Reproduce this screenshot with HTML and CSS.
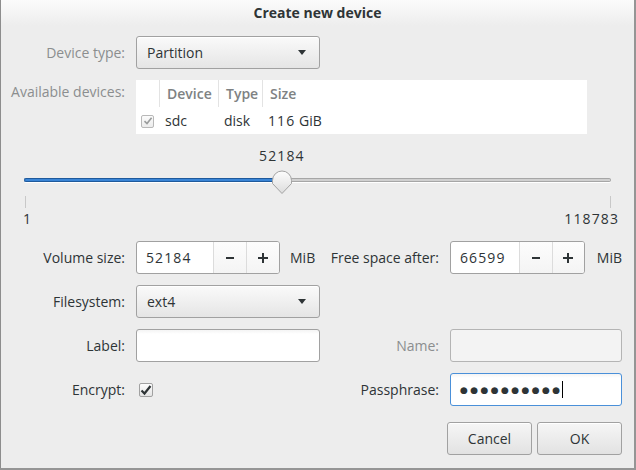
FILE: index.html
```html
<!DOCTYPE html>
<html>
<head>
<meta charset="utf-8">
<link rel="stylesheet" href="styles.css">
</head>
<body>
<div class="window">
  <div class="titlebar">Create new device</div>
  <div class="content">
    <div class="lbl dim g1 r1">Device type:</div>
    <div class="combo g2 r1"><span>Partition</span><span class="arrow"></span></div>

    <div class="lbl dim top g1 r2">Available devices:</div>
    <div class="table r2">
      <div class="tr th">
        <div class="cell ccheck"></div>
        <div class="cell cdev">Device</div>
        <div class="cell ctype">Type</div>
        <div class="cell csize">Size</div>
      </div>
      <div class="tr td">
        <div class="cell ccheck"><span class="tcheck"><svg width="10" height="10" viewBox="0 0 10 10"><path d="M1.5 5.2 L4 7.6 L8.6 1.8" fill="none" stroke="#9a9c9c" stroke-width="1.6"/></svg></span></div>
        <div class="cell cdev">sdc</div>
        <div class="cell ctype">disk</div>
        <div class="cell csize"><span class="num">116</span>&nbsp;GiB</div>
      </div>
    </div>

    <div class="slider r3" style="--pos: 43.93%">
      <div class="sval"><span class="num">52184</span></div>
      <div class="trackwrap">
        <div class="track"><div class="fill"></div><div class="rest"></div></div>
        <svg class="knob" width="22" height="25" viewBox="0 0 22 25">
          <defs><linearGradient id="kg" x1="0" y1="0" x2="0" y2="1"><stop offset="0" stop-color="#fdfdfd"/><stop offset="1" stop-color="#dcdcdc"/></linearGradient></defs>
          <path d="M1.5 10.5 A9.5 9.5 0 0 1 20.5 10.5 L20.5 13.5 L11 23.5 L1.5 13.5 Z" fill="url(#kg)" stroke="#a3a3a3" stroke-width="1"/>
        </svg>
      </div>
      <div class="ticks"><span></span><span></span></div>
      <div class="marks"><span class="num">1</span><span class="num">118783</span></div>
    </div>

    <div class="lbl g1 r4">Volume size:</div>
    <div class="spinrow g2 r4">
      <div class="spin"><div class="sent w77 num">52184</div><div class="sbtn"><svg width="10" height="10" viewBox="0 0 10 10"><path d="M1 5H9" stroke="#2e3436" stroke-width="2"/></svg></div><div class="sbtn"><svg width="10" height="10" viewBox="0 0 10 10"><path d="M0 5H10M5 0V10" stroke="#2e3436" stroke-width="2"/></svg></div></div>
      <span class="unit">MiB</span>
    </div>
    <div class="lbl g3 r4">Free space after:</div>
    <div class="spinrow g4 r4">
      <div class="spin"><div class="sent w70 num">66599</div><div class="sbtn"><svg width="10" height="10" viewBox="0 0 10 10"><path d="M1 5H9" stroke="#2e3436" stroke-width="2"/></svg></div><div class="sbtn"><svg width="10" height="10" viewBox="0 0 10 10"><path d="M0 5H10M5 0V10" stroke="#2e3436" stroke-width="2"/></svg></div></div>
      <span class="unit u2">MiB</span>
    </div>

    <div class="lbl g1 r5">Filesystem:</div>
    <div class="combo g2 r5"><span>ext4</span><span class="arrow"></span></div>

    <div class="lbl g1 r6">Label:</div>
    <div class="entry g2 r6"></div>
    <div class="lbl dim g3 r6">Name:</div>
    <div class="entry insens g4 r6"></div>

    <div class="lbl g1 r7">Encrypt:</div>
    <div class="cbwrap g2 r7"><span class="cbox"><svg width="12" height="12" viewBox="0 0 12 12"><path d="M1.5 6.5 L4.5 9.5 L10.5 2" fill="none" stroke="#2e3436" stroke-width="2.2"/></svg></span></div>
    <div class="lbl g3 r7">Passphrase:</div>
    <div class="entry focus g4 r7"><span class="dots">●●●●●●●●●●</span><span class="cursor"></span></div>

    <div class="buttons r8">
      <div class="btn">Cancel</div>
      <div class="btn">OK</div>
    </div>
  </div>
</div>
</body>
</html>
```
FILE: styles.css
```css
* { box-sizing: border-box; }
html, body { margin: 0; padding: 0; }
body {
  width: 636px; height: 470px; overflow: hidden;
  background: #959595;
  font-family: "Open Sans", "DejaVu Sans", sans-serif;
  font-size: 14px;
  color: #2e3436;
}
.window {
  width: 634px; height: 468px;
  background: #ededed;
  border-left: 1px solid #8d8d8d;
}
.titlebar {
  height: 26px; line-height: 26px;
  text-align: center; font-weight: bold;
  background: linear-gradient(#fbfbfb, #ededed);
  color: #2e3436;
}
.content {
  display: grid;
  grid-template-columns: 124px 184px 108px 172px;
  grid-template-rows: 33px 54px 85px 33px 33px 33px 33px 33px;
  column-gap: 11px; row-gap: 11px;
  padding-top: 10px;
}
.g1 { grid-column: 1; }
.g2 { grid-column: 2; }
.g3 { grid-column: 3; }
.g4 { grid-column: 4; }
.r1 { grid-row: 1; }
.r2 { grid-row: 2; }
.r3 { grid-row: 3; }
.r4 { grid-row: 4; }
.r5 { grid-row: 5; }
.r6 { grid-row: 6; }
.r7 { grid-row: 7; }
.r8 { grid-row: 8; }

.num { letter-spacing: 1.1px; }

.lbl { justify-self: end; align-self: center; white-space: nowrap; }
.lbl.dim { color: #8b8e8f; }
.lbl.top { align-self: start; line-height: 24px; }

.combo {
  display: flex; align-items: center; justify-content: space-between;
  padding: 0 13px 0 10px;
  border: 1px solid #a1a1a1; border-radius: 3px;
  background: linear-gradient(#fafafa, #e5e5e5);
  box-shadow: inset 0 1px #fff;
}
.arrow {
  width: 0; height: 0;
  border-left: 4px solid transparent; border-right: 4px solid transparent;
  border-top: 5px solid #2e3436;
}

.table {
  grid-column: 2 / 5; width: 451px;
  background: #fff;
  display: flex; flex-direction: column;
}
.tr { display: flex; height: 27px; align-items: stretch; }
.cell { display: flex; align-items: center; }
.ccheck { width: 23px; justify-content: center; }
.cdev { width: 59px; }
.ctype { width: 44px; }
.csize { flex: 1; }
.th .cell { padding-left: 7px; color: #7e8283; font-weight: 600; }
.th .ccheck { padding-left: 0; }
.th .cdev, .th .ctype, .th .csize { border-left: 1px solid #e3e3e3; }
.td .cell { padding-left: 6px; }
.td .ccheck { padding-left: 0; padding-top: 1px; }
.tcheck {
  width: 13px; height: 13px;
  border: 1px solid #b8b8b8; border-radius: 2px;
  background: linear-gradient(#fbfbfb, #ececec);
  display: flex; align-items: center; justify-content: center;
}

.slider {
  grid-column: 1 / -1;
  margin-left: 22px; width: 595px;
  display: flex; flex-direction: column;
}
.sval { height: 22px; line-height: 22px; padding-left: calc(1px + 587px * 0.4393); }
.sval span { display: inline-block; transform: translateX(-50%); }
.trackwrap { position: relative; height: 27px; }
.track {
  position: absolute; left: 1px; top: 11px; width: 587px; height: 4px;
  display: flex; box-shadow: 0 1px 0 #fff; border-radius: 2px;
}
.fill {
  width: var(--pos); height: 4px;
  background: #3a85d6; border: 1px solid #1f5a9c; border-right: none;
  border-radius: 2px 0 0 2px;
}
.rest {
  flex: 1; height: 4px;
  background: #d0d0d0; border: 1px solid #a6a6a6; border-left: none;
  border-radius: 0 2px 2px 0;
}
.knob { position: absolute; top: 3px; left: calc(1px + 587px * 0.4393 - 11px); }
.ticks { height: 12px; margin-top: 2px; display: flex; justify-content: space-between; padding: 0 7px 0 2px; }
.ticks span { width: 1px; height: 12px; background: #c8c8c8; }
.marks { height: 22px; line-height: 22px; display: flex; justify-content: space-between; }
.marks .num:last-child { margin-right: -1px; }

.spinrow { display: flex; align-items: center; gap: 10px; }
.spin {
  display: flex; height: 33px;
  border: 1px solid #a1a1a1; border-radius: 3px;
  background: #fff; overflow: hidden;
}
.sent { display: flex; align-items: center; padding-left: 9px; }
.w77 { width: 76px; }
.w70 { width: 70px; }
.sbtn {
  width: 33px; display: flex; align-items: center; justify-content: center;
  border-left: 1px solid #dcdcdc;
  background: linear-gradient(#fdfdfd, #f4f4f4);
}
.u2 { margin-left: 2px; }

.entry {
  border: 1px solid #a1a1a1; border-radius: 3px;
  background: linear-gradient(#f4f4f4, #fff 4px);
  display: flex; align-items: center; padding-left: 9px;
}
.entry.insens { background: #f3f3f3; border-color: #b4b4b4; }
.entry.focus { border-color: #4a90d9; }
.cbwrap { display: flex; align-items: center; padding-left: 3px; }
.cbox {
  width: 14px; height: 14px;
  border: 1px solid #a1a1a1; border-radius: 2px;
  background: linear-gradient(#fdfdfd, #e4e4e4);
  display: flex; align-items: center; justify-content: center;
}
.dots { font-family: "DejaVu Sans", sans-serif; font-size: 9px; letter-spacing: 2.4px; color: #2e3436; }
.cursor { width: 1px; height: 17px; background: #000; margin-left: -1px; }

.buttons {
  grid-column: 1 / -1;
  display: flex; justify-content: flex-end; gap: 5px;
  margin-top: 5px;
}
.btn {
  width: 85px; height: 33px;
  display: flex; align-items: center; justify-content: center;
  border: 1px solid #a1a1a1; border-radius: 3px;
  background: linear-gradient(#f6f6f6, #e2e2e2);
  box-shadow: inset 0 1px #fff;
}
```
